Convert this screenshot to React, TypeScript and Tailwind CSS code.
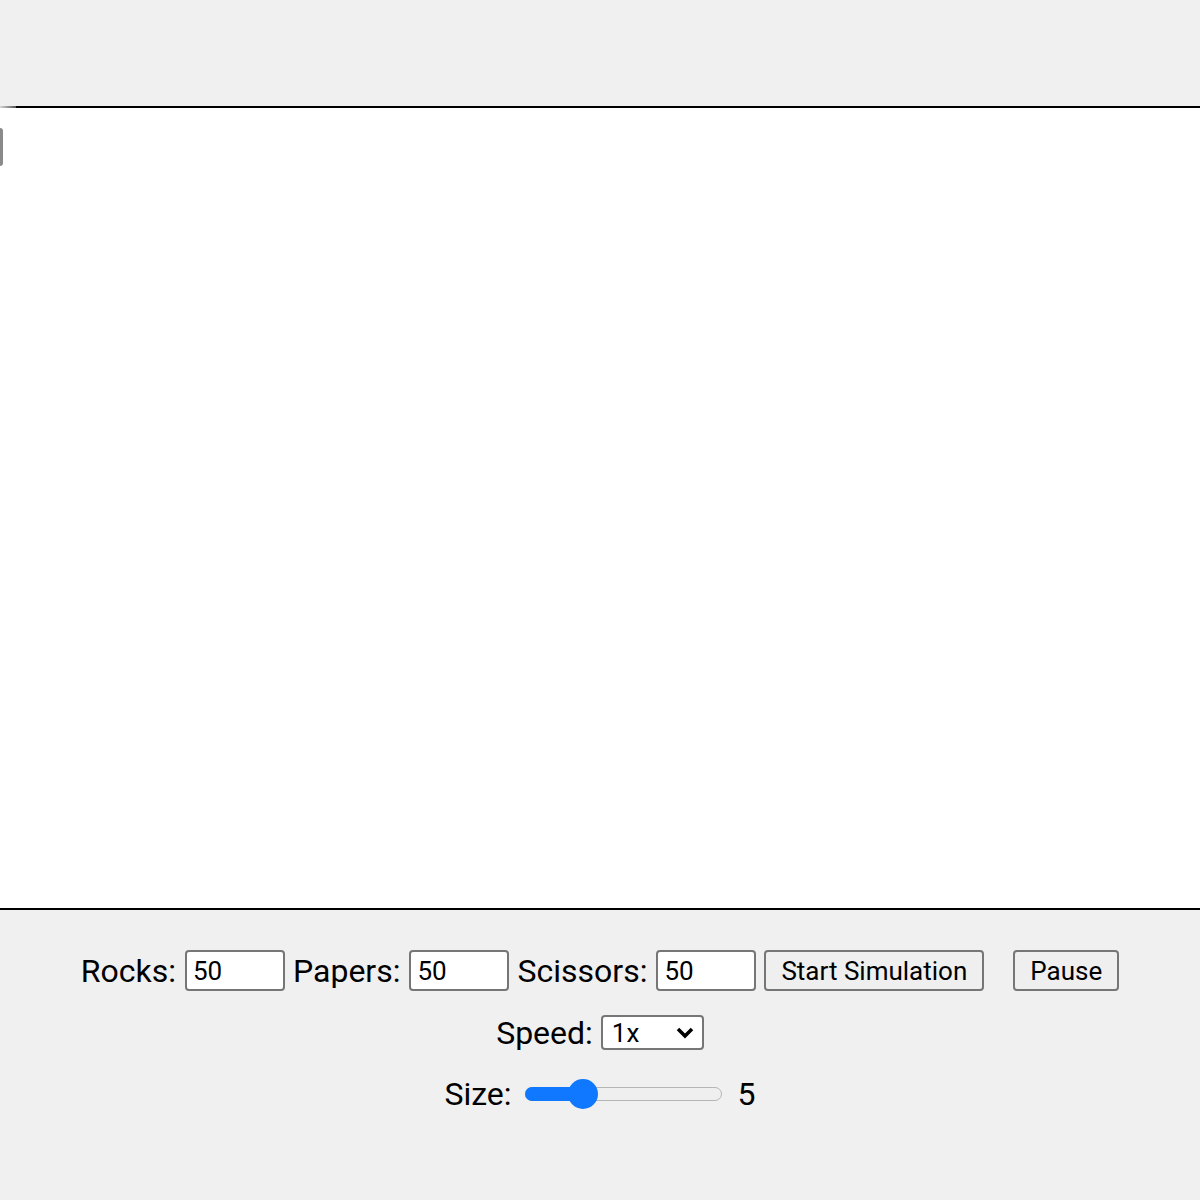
import { useState } from 'react';

// Rock/paper/scissors simulation shell: empty canvas with the control strip below.

const field =
  'h-[41px] rounded-[4px] border-2 border-[#767676] bg-white px-[6px] text-[26px] text-black outline-none';
const btn =
  'h-[41px] rounded-[4px] border-2 border-[#767676] bg-[#efefef] px-[15px] text-[26px] text-black';

function CountInput({ label, value, onChange }: { label: string; value: string; onChange: (v: string) => void }) {
  return (
    <div className="flex items-center gap-[9px]">
      <span>{label}</span>
      <input className={`${field} w-[100px]`} value={value} onChange={(e) => onChange(e.target.value)} />
    </div>
  );
}

function SizeSlider({ value }: { value: number }) {
  const pct = ((value - 1) / 19) * 100;
  return (
    <div className="relative h-[30px] w-[197px]">
      <div className="absolute left-0 right-0 top-[8px] h-[14px] rounded-full border border-[#b5b5b5] bg-[#efefef]" />
      <div className="absolute left-0 top-[8px] h-[14px] rounded-full bg-[#0f78ff]" style={{ width: `${pct + 10}%` }} />
      <div
        className="absolute top-0 h-[30px] w-[30px] -translate-x-1/2 rounded-full bg-[#0f78ff]"
        style={{ left: `calc(15px + ${pct}% * 1.05)` }}
      />
    </div>
  );
}

export default function App() {
  const [rocks, setRocks] = useState('50');
  const [papers, setPapers] = useState('50');
  const [scissors, setScissors] = useState('50');

  return (
    <div className="min-h-[1200px] bg-[#f0f0f0] font-['Roboto',sans-serif] text-[32px] leading-none text-black">
      <div className="h-[106px]" />
      <div className="relative h-[804px] border-y-2 border-black bg-white">
        <div className="absolute -top-[2px] left-0 h-[2px] w-[16px] bg-gradient-to-r from-[#d8d8d8] to-[#555]" />
        <div className="absolute left-0 top-[20px] h-[38px] w-[3px] rounded-r-sm bg-[#8a8a8a]" />
      </div>

      <div className="flex flex-col items-center">
        <div className="mt-[40px] flex items-center gap-[8px]">
          <CountInput label="Rocks:" value={rocks} onChange={setRocks} />
          <CountInput label="Papers:" value={papers} onChange={setPapers} />
          <CountInput label="Scissors:" value={scissors} onChange={setScissors} />
          <button className={btn}>Start Simulation</button>
          <button className={`${btn} ml-[21px]`}>Pause</button>
        </div>

        <div className="mt-[24px] flex h-[35px] items-center gap-[8px]">
          <span>Speed:</span>
          <div className="relative">
            <select className="block h-[35px] w-[103px] appearance-none rounded-[4px] border-2 border-[#767676] bg-white pl-[9px] text-[26px] leading-none outline-none">
              <option>1x</option>
              <option>2x</option>
              <option>5x</option>
            </select>
            <svg
              className="pointer-events-none absolute right-[10px] top-1/2 -translate-y-1/2"
              width="18"
              height="12"
              viewBox="0 0 18 12"
            >
              <path d="M2 2 L9 9 L16 2" fill="none" stroke="black" strokeWidth="3.5" />
            </svg>
          </div>
        </div>

        <div className="mt-[24px] flex h-[40px] items-center gap-[13px]">
          <span>Size:</span>
          <SizeSlider value={5} />
          <span className="ml-[3px]">5</span>
        </div>
      </div>
    </div>
  );
}
